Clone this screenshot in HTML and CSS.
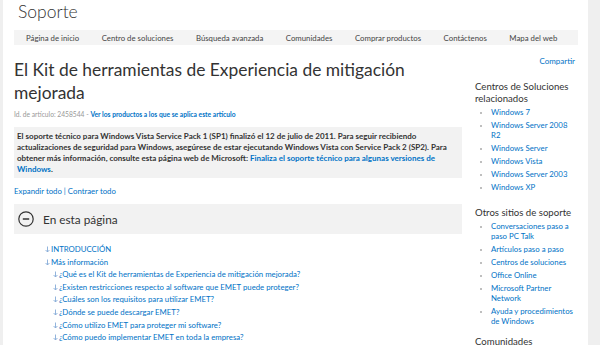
FILE: index.html
```html
<!DOCTYPE html>
<html lang="es">

<head>
    <meta charset="UTF-8">
    <title>Soporte - El Kit de herramientas de Experiencia de mitigación mejorada</title>
    <link rel="stylesheet" href="styles.css">
</head>

<body>
    <div class="page">
        <!-- Header -->
        <div class="brand">Soporte</div>

        <div class="nav">
            <a href="#">Página de inicio</a>
            <a href="#">Centro de soluciones</a>
            <a href="#">Búsqueda avanzada</a>
            <a href="#">Comunidades</a>
            <a href="#">Comprar productos</a>
            <a href="#">Contáctenos</a>
            <a href="#">Mapa del web</a>
        </div>

        <div class="layout">
            <!-- Article -->
            <div class="main">
                <h1 class="title">El Kit de herramientas de Experiencia de mitigación mejorada</h1>
                <div class="article-id">Id. de artículo: 2458544 - <a href="#">Ver los productos a los que se aplica este artículo</a></div>

                <div class="notice">
                    El soporte técnico para Windows Vista Service Pack 1 (SP1) finalizó el 12 de julio de 2011. Para seguir recibiendo
                    actualizaciones de seguridad para Windows, asegúrese de estar ejecutando Windows Vista con Service Pack 2 (SP2). Para
                    obtener más información, consulte esta página web de Microsoft: <a href="#">Finaliza el soporte técnico para algunas versiones de Windows</a>.
                </div>

                <div class="expand"><a href="#">Expandir todo</a> | <a href="#">Contraer todo</a></div>

                <div class="section-head">
                    <svg width="16" height="16" viewBox="0 0 16 16">
                        <circle cx="8" cy="8" r="7.2" fill="none" stroke="#333" stroke-width="1.2" />
                        <line x1="4.8" y1="8" x2="11.2" y2="8" stroke="#333" stroke-width="1.5" />
                    </svg>
                    <span>En esta página</span>
                </div>

                <ul class="toc">
                    <li><a href="#"><svg class="arrow" width="5" height="7" viewBox="0 0 5 7"><path d="M2.5 0.5V6M0.6 4L2.5 6L4.4 4" fill="none" stroke="#86acd8" stroke-width="0.9" /></svg>INTRODUCCIÓN</a></li>
                    <li><a href="#"><svg class="arrow" width="5" height="7" viewBox="0 0 5 7"><path d="M2.5 0.5V6M0.6 4L2.5 6L4.4 4" fill="none" stroke="#86acd8" stroke-width="0.9" /></svg>Más información</a>
                        <ul>
                            <li><a href="#"><svg class="arrow" width="5" height="7" viewBox="0 0 5 7"><path d="M2.5 0.5V6M0.6 4L2.5 6L4.4 4" fill="none" stroke="#86acd8" stroke-width="0.9" /></svg>¿Qué es el Kit de herramientas de Experiencia de mitigación mejorada?</a></li>
                            <li><a href="#"><svg class="arrow" width="5" height="7" viewBox="0 0 5 7"><path d="M2.5 0.5V6M0.6 4L2.5 6L4.4 4" fill="none" stroke="#86acd8" stroke-width="0.9" /></svg>¿Existen restricciones respecto al software que EMET puede proteger?</a></li>
                            <li><a href="#"><svg class="arrow" width="5" height="7" viewBox="0 0 5 7"><path d="M2.5 0.5V6M0.6 4L2.5 6L4.4 4" fill="none" stroke="#86acd8" stroke-width="0.9" /></svg>¿Cuáles son los requisitos para utilizar EMET?</a></li>
                            <li><a href="#"><svg class="arrow" width="5" height="7" viewBox="0 0 5 7"><path d="M2.5 0.5V6M0.6 4L2.5 6L4.4 4" fill="none" stroke="#86acd8" stroke-width="0.9" /></svg>¿Dónde se puede descargar EMET?</a></li>
                            <li><a href="#"><svg class="arrow" width="5" height="7" viewBox="0 0 5 7"><path d="M2.5 0.5V6M0.6 4L2.5 6L4.4 4" fill="none" stroke="#86acd8" stroke-width="0.9" /></svg>¿Cómo utilizo EMET para proteger mi software?</a></li>
                            <li><a href="#"><svg class="arrow" width="5" height="7" viewBox="0 0 5 7"><path d="M2.5 0.5V6M0.6 4L2.5 6L4.4 4" fill="none" stroke="#86acd8" stroke-width="0.9" /></svg>¿Cómo puedo implementar EMET en toda la empresa?</a></li>
                        </ul>
                    </li>
                </ul>
            </div>

            <!-- Sidebar -->
            <div class="side">
                <div class="share"><a href="#">Compartir</a></div>

                <h3 class="first">Centros de Soluciones relacionados</h3>
                <ul class="links">
                    <li><a href="#">Windows 7</a></li>
                    <li><a href="#">Windows Server 2008 R2</a></li>
                    <li><a href="#">Windows Server</a></li>
                    <li><a href="#">Windows Vista</a></li>
                    <li><a href="#">Windows Server 2003</a></li>
                    <li><a href="#">Windows XP</a></li>
                </ul>

                <h3>Otros sitios de soporte</h3>
                <ul class="links">
                    <li><a href="#">Conversaciones paso a paso PC Talk</a></li>
                    <li><a href="#">Artículos paso a paso</a></li>
                    <li><a href="#">Centros de soluciones</a></li>
                    <li><a href="#">Office Online</a></li>
                    <li><a href="#">Microsoft Partner Network</a></li>
                    <li><a href="#">Ayuda y procedimientos de Windows</a></li>
                </ul>

                <h3 class="last">Comunidades</h3>
            </div>
        </div>
    </div>
</body>

</html>
```

FILE: styles.css
```css
/* General styles */
body {
    margin: 0;
    font-family: Lato, "Open Sans", sans-serif;
    background-color: #efefef;
    color: #333;
    height: 345px;
    overflow: hidden;
}

a {
    color: #0072c6;
    text-decoration: none;
}

.page {
    width: 574px;
    margin-left: 3px;
    padding: 0 0 0 11px;
    background: #fff;
    height: 345px;
    overflow: hidden;
}

/* Header */
.brand {
    font-size: 17.5px;
    font-weight: 300;
    line-height: 24px;
    padding-left: 4px;
}

.nav {
    display: flex;
    gap: 22.5px;
    margin-top: 6px;
    padding: 0 12px;
    height: 15px;
    align-items: center;
    background: #f4f4f4;
    width: 540px;
}

.nav a {
    color: #444;
    font-size: 7.8px;
    white-space: nowrap;
}

/* Two columns */
.layout {
    display: flex;
    gap: 13px;
}

.main {
    width: 448px;
    flex-shrink: 0;
}

.title {
    font-size: 17.4px;
    font-weight: 400;
    line-height: 23px;
    margin: 13px 0 0;
}

.article-id {
    font-size: 6.7px;
    line-height: 9px;
    color: #999;
    margin-top: 6px;
}

.article-id a {
    font-weight: 700;
}

.notice {
    background: #f2f2f2;
    font-size: 8px;
    font-weight: 700;
    line-height: 11px;
    padding: 4px 10px 3px 3px;
    margin-top: 8px;
}

.expand {
    font-size: 7.8px;
    line-height: 11px;
    color: #0072c6;
    margin-top: 8px;
}

.section-head {
    display: flex;
    align-items: center;
    gap: 9px;
    background: #f2f2f2;
    height: 30px;
    padding-left: 4px;
    margin-top: 7px;
    font-size: 11.8px;
}

.toc {
    list-style: none;
    margin: 9px 0 0;
    padding-left: 31px;
    font-size: 7.8px;
    line-height: 12.6px;
}

.toc ul {
    list-style: none;
    margin: 0;
    padding-left: 8px;
}

.arrow {
    margin-right: 1px;
    vertical-align: -1px;
}

/* Sidebar */
.side {
    width: 102px;
    flex-shrink: 0;
}

.share {
    text-align: right;
    font-size: 8px;
    line-height: 10px;
    margin-top: 11px;
    padding-right: 2px;
}

.side h3 {
    font-size: 9.6px;
    font-weight: 400;
    line-height: 12px;
    margin: 15px 0 2px;
}

.side h3.first {
    margin-top: 15px;
}

.side h3.last {
    margin-top: 10px;
}

.links {
    margin: 0;
    padding-left: 16px;
    font-size: 7.8px;
    line-height: 10px;
}

.links li {
    margin-bottom: 3px;
}

.links li::marker {
    color: #aaa;
    font-size: 7px;
}
```
